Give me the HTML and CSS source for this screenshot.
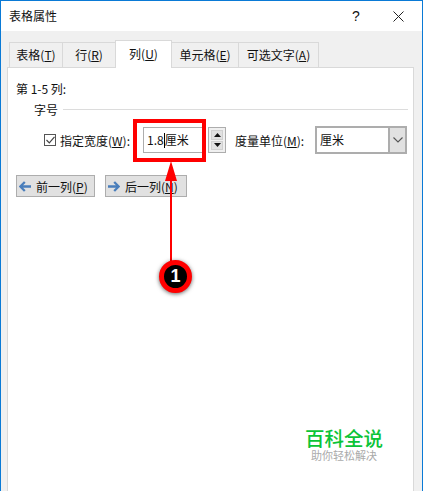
FILE: index.html
```html
<!DOCTYPE html>
<html lang="zh-CN">
<head>
  <meta charset="UTF-8" />
  <title>表格属性</title>
  <link rel="stylesheet" href="styles.css">
</head>
<body>
  <div class="window">
    <div class="titlebar">
      <span class="title">表格属性</span>
      <span class="help">?</span>
      <svg class="close" width="11" height="11" viewBox="0 0 11 11"><path d="M0.5 0.5L10.5 10.5M10.5 0.5L0.5 10.5" stroke="#222" stroke-width="1" fill="none"/></svg>
    </div>

    <div class="content">
      <div class="tabs">
        <div class="tab tab-table">表格(<u>T</u>)</div>
        <div class="tab tab-row">行(<u>R</u>)</div>
        <div class="tab tab-col active">列(<u>U</u>)</div>
        <div class="tab tab-cell">单元格(<u>E</u>)</div>
        <div class="tab tab-alt">可选文字(<u>A</u>)</div>
      </div>

      <div class="panel">
        <div class="col-range">第 1-5 列:</div>
        <div class="group-title"><span>字号</span><div class="group-line"></div></div>

        <div class="size-row">
          <span class="checkbox">
            <svg width="9" height="8" viewBox="0 0 9 8"><path d="M0.5 4L3.3 6.8L8.5 0.8" stroke="#444" stroke-width="1.2" fill="none"/></svg>
          </span>
          <span class="size-label">指定宽度(<u>W</u>):</span>
          <div class="size-input">1.8<i class="caret"></i>厘米</div>
          <div class="spinner">
            <div class="spin-btn"><svg width="7" height="4" viewBox="0 0 7 4"><path d="M3.5 0L7 4H0Z" fill="#111"/></svg></div>
            <div class="spin-btn"><svg width="7" height="4" viewBox="0 0 7 4"><path d="M0 0H7L3.5 4Z" fill="#111"/></svg></div>
          </div>
          <span class="unit-label">度量单位(<u>M</u>):</span>
          <div class="unit-select">
            <span class="unit-value">厘米</span>
            <span class="unit-arrow"><svg width="10" height="6" viewBox="0 0 10 6"><path d="M0.5 0.5L5 5L9.5 0.5" stroke="#555" stroke-width="1.1" fill="none"/></svg></span>
          </div>
        </div>

        <div class="nav-row">
          <div class="nav-btn prev">
            <svg width="12" height="11" viewBox="0 0 12 11"><path d="M5.8 1L1.3 5.5L5.8 10M2 5.5H12" stroke="#4a7ebb" stroke-width="2.3" fill="none"/></svg>
            <span>前一列(<u>P</u>)</span>
          </div>
          <div class="nav-btn next">
            <svg width="12" height="11" viewBox="0 0 12 11"><path d="M6.2 1L10.7 5.5L6.2 10M10 5.5H0" stroke="#4a7ebb" stroke-width="2.3" fill="none"/></svg>
            <span>后一列(<u>N</u>)</span>
          </div>
        </div>
      </div>
    </div>

    <!-- annotation on top of the dialog -->
    <div class="mark-box"></div>
    <svg class="mark-arrow" width="20" height="112" viewBox="0 0 20 112">
      <path d="M10 1L16 21H11V112H9V21H4Z" fill="#f00"/>
    </svg>
    <div class="mark-badge">1</div>

    <div class="brand">
      <div class="brand-name">百科全说</div>
      <div class="brand-sub">助你轻松解决</div>
    </div>
  </div>
</body>
</html>
```

FILE: styles.css
```css
* {
  box-sizing: border-box;
}
html, body {
  margin: 0;
  height: 100%;
}
body {
  font-family: "Noto Sans CJK SC", "Noto Sans", sans-serif;
  font-size: 12px;
  color: #111;
  background: #fff;
}
u {
  text-underline-offset: 1px;
}

.window {
  position: relative;
  display: flex;
  flex-direction: column;
  height: 491px;
  border: 1px solid #0a7ad6;
  border-bottom: 0;
  overflow: hidden;
}

.titlebar {
  display: flex;
  align-items: center;
  height: 30px;
  padding-left: 8px;
  background: #fff;
}
.title {
  flex: 1;
  line-height: 30px;
}
.help {
  width: 12px;
  margin-right: 29px;
  font-size: 14px;
  font-family: "Liberation Sans", sans-serif;
}
.close {
  margin-right: 18px;
}

.content {
  flex: 1;
  display: flex;
  flex-direction: column;
  padding: 11px 8px 0 6px;
  background: #f0f0f0;
}

.tabs {
  display: flex;
  align-items: flex-end;
  height: 26px;
  margin-bottom: -1px;
  position: relative;
  z-index: 1;
  padding-left: 2px;
}
.tab {
  height: 26px;
  line-height: 24px;
  text-align: center;
  background: #f0f0f0;
  border: 1px solid #d9d9d9;
  border-left: 0;
  white-space: nowrap;
}
.tab-table {
  width: 54px;
  border-left: 1px solid #d9d9d9;
}
.tab-row {
  width: 53px;
}
.tab-col {
  width: 57px;
}
.tab-cell {
  width: 67px;
}
.tab-alt {
  width: 80px;
}
.tab.active {
  height: 28px;
  line-height: 26px;
  background: #fff;
  border-bottom: 0;
  border-left: 1px solid #d9d9d9;
  margin-left: -1px;
}

.panel {
  flex: 1;
  background: #fff;
  border: 1px solid #d9d9d9;
  border-bottom: 0;
  padding: 12px 5px 0 8px;
}

.col-range {
  line-height: 18px;
}
.group-title {
  display: flex;
  align-items: center;
  gap: 5px;
  margin: 3px 0 0 18px;
  line-height: 18px;
}
.group-line {
  flex: 1;
  height: 1px;
  margin-top: -1px;
  background: #dcdcdc;
}

.size-row {
  display: flex;
  align-items: center;
  height: 28px;
  margin-top: 7px;
  padding-left: 28px;
}
.checkbox {
  display: flex;
  align-items: center;
  justify-content: center;
  width: 12px;
  height: 12px;
  border: 1px solid #555;
}
.size-label {
  width: 83px;
  margin-left: 4px;
  white-space: nowrap;
}
.size-input {
  width: 60px;
  height: 26px;
  border: 1px solid #adadad;
  padding-left: 3px;
  line-height: 24px;
  white-space: nowrap;
}
.caret {
  display: inline-block;
  width: 1px;
  height: 15px;
  vertical-align: -3px;
  background: #000;
}
.spinner {
  display: flex;
  flex-direction: column;
  gap: 1px;
  width: 18px;
  height: 26px;
  margin-left: 5px;
  padding: 2px;
  border: 1px solid #adadad;
  background: #f0f0f0;
}
.spin-btn {
  flex: 1;
  display: flex;
  align-items: center;
  justify-content: center;
  background: #e1e1e1;
  border: 1px solid #d0d0d0;
}
.unit-label {
  width: 80px;
  margin-left: 9px;
  white-space: nowrap;
}
.unit-select {
  display: flex;
  width: 92px;
  height: 28px;
  border: 2px solid #adadad;
}
.unit-value {
  flex: 1;
  padding-left: 3px;
  line-height: 24px;
}
.unit-arrow {
  display: flex;
  align-items: center;
  justify-content: center;
  width: 17px;
  background: #e1e1e1;
  border-left: 2px solid #adadad;
}

.nav-row {
  display: flex;
  gap: 10px;
  margin-top: 21px;
}
.nav-btn {
  display: flex;
  align-items: center;
  gap: 5px;
  height: 22px;
  padding-left: 2px;
  background: #e1e1e1;
  border: 1px solid #adadad;
  white-space: nowrap;
}
.prev {
  width: 79px;
}
.next {
  width: 82px;
}

/* annotation layer */
.mark-box {
  position: absolute;
  left: 132px;
  top: 118px;
  width: 73px;
  height: 43px;
  border: 4px solid #f00;
}
.mark-arrow {
  position: absolute;
  left: 160px;
  top: 159px;
}
.mark-badge {
  position: absolute;
  left: 158px;
  top: 259px;
  width: 33px;
  height: 33px;
  border: 5px solid #f00;
  border-radius: 50%;
  background: #000;
  box-shadow: 0 1px 4px rgba(0, 0, 0, 0.6);
  color: #fff;
  font-family: "Liberation Sans", sans-serif;
  font-size: 18px;
  font-weight: bold;
  line-height: 23px;
  text-align: center;
}

.brand {
  position: absolute;
  left: 304px;
  top: 426px;
  width: 78px;
  text-align: center;
}
.brand-name {
  color: #0bc437;
  font-size: 19.5px;
  font-weight: 500;
  line-height: 21px;
  white-space: nowrap;
}
.brand-sub {
  color: #aaa;
  font-size: 11px;
  line-height: 14px;
  white-space: nowrap;
}
```
